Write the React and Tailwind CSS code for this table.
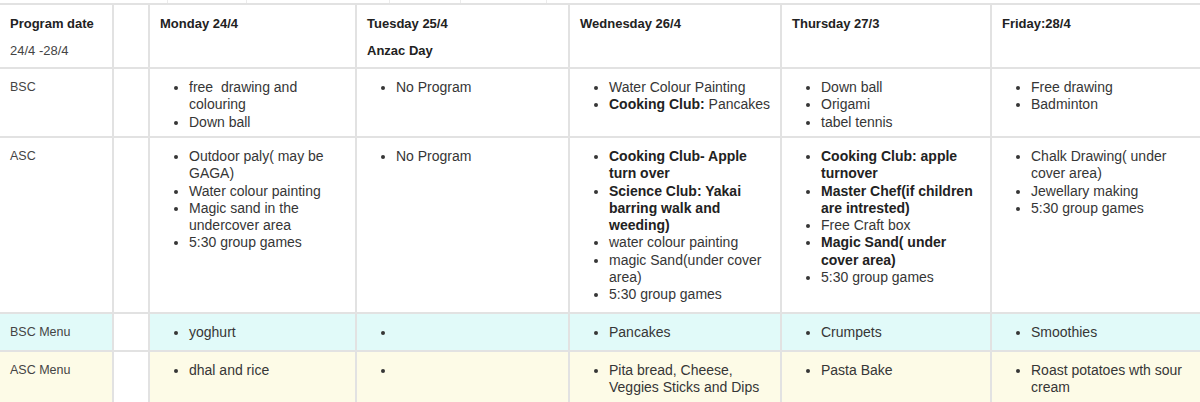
import React from "react";

const B = ({ children }) => <span className="font-bold text-[#222]">{children}</span>;

const Cell = ({ children, className = "" }) => (
  <div className={`border-r-2 border-b-2 border-[#e2e2e2] pl-[10px] pr-[6px] pt-[10px] ${className}`}>{children}</div>
);

const List = ({ items }) => (
  <ul className="list-disc pl-[29px] text-[14px] leading-[17.3px] text-[#363636]">
    {items.map((it, i) => (
      <li key={i}>{it === "" ? "\u00a0" : it}</li>
    ))}
  </ul>
);

const Label = ({ children, className = "" }) => (
  <Cell className={className}>
    <div className="text-[12.5px] leading-[17px] text-[#444]">{children}</div>
  </Cell>
);

const Head = ({ title, sub }) => (
  <Cell>
    <div className="text-[13px] leading-[17px] font-bold text-[#222]">{title}</div>
    {sub && <div className="mt-[10px] text-[13px] leading-[17px] font-bold text-[#222]">{sub}</div>}
  </Cell>
);

export default function App() {
  const cyan = "bg-[#e1faf9]";
  const yellow = "bg-[#fdfbe7]";
  return (
    <div className="w-[1200px] h-[402px] overflow-hidden bg-white font-['Liberation_Sans',Arial,sans-serif]">
      <div className="flex h-[3px]">
        <div className="w-[168px] border-r border-[#ececec]" />
        <div className="w-[79px] border-r border-[#ececec]" />
        <div className="w-[143px] border-r border-[#ececec]" />
        <div className="w-[71px] border-r border-[#ececec]" />
        <div className="w-[86px] border-r border-[#ececec]" />
      </div>
      <div className="grid w-[1202px] grid-cols-[114px_36px_207px_213px_212px_210px_210px] grid-rows-[64px_69px_176px_38px_60px] border-t-2 border-[#e2e2e2]">
        {/* Header */}
        <Cell>
          <div className="text-[13px] leading-[17px] font-bold text-[#222]">Program date</div>
          <div className="mt-[10px] text-[13px] leading-[17px] text-[#444]">24/4 -28/4</div>
        </Cell>
        <Cell />
        <Head title="Monday 24/4" />
        <Head title="Tuesday 25/4" sub="Anzac Day" />
        <Head title="Wednesday 26/4" />
        <Head title="Thursday 27/3" />
        <Head title="Friday:28/4" />

        {/* BSC */}
        <Label>BSC</Label>
        <Cell />
        <Cell><List items={["free\u00a0 drawing and colouring", "Down ball"]} /></Cell>
        <Cell><List items={["No Program"]} /></Cell>
        <Cell>
          <List items={["Water Colour Painting", <><B>Cooking Club:</B> Pancakes</>]} />
        </Cell>
        <Cell><List items={["Down ball", "Origami", "tabel tennis"]} /></Cell>
        <Cell><List items={["Free drawing", "Badminton"]} /></Cell>

        {/* ASC */}
        <Label>ASC</Label>
        <Cell />
        <Cell>
          <List
            items={[
              "Outdoor paly( may be GAGA)",
              "Water colour painting",
              "Magic sand in the undercover area",
              "5:30 group games",
            ]}
          />
        </Cell>
        <Cell><List items={["No Program"]} /></Cell>
        <Cell>
          <List
            items={[
              <B>Cooking Club- Apple turn over</B>,
              <B>Science Club: Yakai barring walk and weeding)</B>,
              "water colour painting",
              "magic Sand(under cover area)",
              "5:30 group games",
            ]}
          />
        </Cell>
        <Cell>
          <List
            items={[
              <B>Cooking Club: apple turnover</B>,
              <B>Master Chef(if children are intrested)</B>,
              "Free Craft box",
              <B>Magic Sand( under cover area)</B>,
              "5:30 group games",
            ]}
          />
        </Cell>
        <Cell>
          <List items={["Chalk Drawing( under cover area)", "Jewellary making", "5:30 group games"]} />
        </Cell>

        {/* BSC Menu */}
        <Label className={cyan}>BSC Menu</Label>
        <Cell />
        <Cell className={cyan}><List items={["yoghurt"]} /></Cell>
        <Cell className={cyan}><List items={[""]} /></Cell>
        <Cell className={cyan}><List items={["Pancakes"]} /></Cell>
        <Cell className={cyan}><List items={["Crumpets"]} /></Cell>
        <Cell className={cyan}><List items={["Smoothies"]} /></Cell>

        {/* ASC Menu */}
        <Label className={yellow}>ASC Menu</Label>
        <Cell />
        <Cell className={yellow}><List items={["dhal and rice"]} /></Cell>
        <Cell className={yellow}><List items={[""]} /></Cell>
        <Cell className={yellow}><List items={["Pita bread, Cheese, Veggies Sticks and Dips"]} /></Cell>
        <Cell className={yellow}><List items={["Pasta Bake"]} /></Cell>
        <Cell className={yellow}><List items={["Roast potatoes wth sour cream"]} /></Cell>
      </div>
    </div>
  );
}
